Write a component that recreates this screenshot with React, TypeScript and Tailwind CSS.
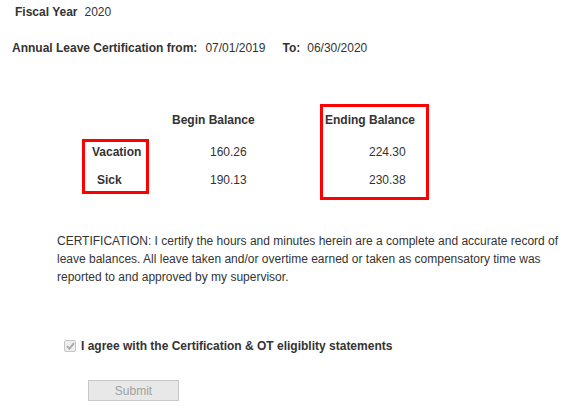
function Check() {
  return (
    <span className="flex h-[12px] w-[12px] items-center justify-center rounded-[2px] border border-[#c6c6c6] bg-[#eeeeee]">
      <svg width="9" height="8" viewBox="0 0 9 8">
        <path d="M1 4.2 L3.4 6.6 L8 1.2" fill="none" stroke="#a8a8a8" strokeWidth="1.8" />
      </svg>
    </span>
  );
}

export default function App() {
  return (
    <div className="h-[408px] w-[566px] bg-white font-['Liberation_Sans',Arial,sans-serif] text-[12px] leading-[14px] text-[#333]">
      <div className="flex pl-[15px] pt-[5px]">
        <span className="font-bold">Fiscal Year</span>
        <span className="ml-[7px]">2020</span>
      </div>

      <div className="mt-[22px] flex pl-[12px]">
        <span className="font-bold">Annual Leave Certification from:</span>
        <span className="ml-[8px]">07/01/2019</span>
        <span className="ml-[17px] font-bold">To:</span>
        <span className="ml-[7px]">06/30/2020</span>
      </div>

      {/* balances table */}
      <div className="mt-[49px] flex pl-[82px]">
        <div className="mt-[35px] h-[55px] w-[67px] border-[3px] border-[#ff0000] font-bold">
          <div className="mt-[3px] pl-[7px]">Vacation</div>
          <div className="mt-[14px] pl-[12px]">Sick</div>
        </div>
        <div className="w-[171px]">
          <div className="mt-[9px] pl-[23px] font-bold">Begin Balance</div>
          <div className="mt-[18px] pl-[61px]">160.26</div>
          <div className="mt-[14px] pl-[61px]">190.13</div>
        </div>
        <div className="h-[96px] w-[109px] border-[3px] border-[#ff0000]">
          <div className="mt-[6px] pl-[2px] font-bold">Ending Balance</div>
          <div className="mt-[18px] pl-[46px]">224.30</div>
          <div className="mt-[14px] pl-[46px]">230.38</div>
        </div>
      </div>

      <p className="ml-[57px] mt-[32px] w-[505px] leading-[18px]">
        CERTIFICATION: I certify the hours and minutes herein are a complete and accurate record of leave
        balances. All leave taken and/or overtime earned or taken as compensatory time was reported to and
        approved by my supervisor.
      </p>

      <div className="ml-[64px] mt-[53px] flex items-center">
        <Check />
        <span className="ml-[5px] font-bold">I agree with the Certification &amp; OT eligiblity statements</span>
      </div>

      <button
        disabled
        className="ml-[88px] mt-[27px] h-[21px] w-[91px] border border-[#c8c8c8] bg-[#e8e8e8] text-[12px] text-[#a0a0a0]"
      >
        Submit
      </button>
    </div>
  );
}
